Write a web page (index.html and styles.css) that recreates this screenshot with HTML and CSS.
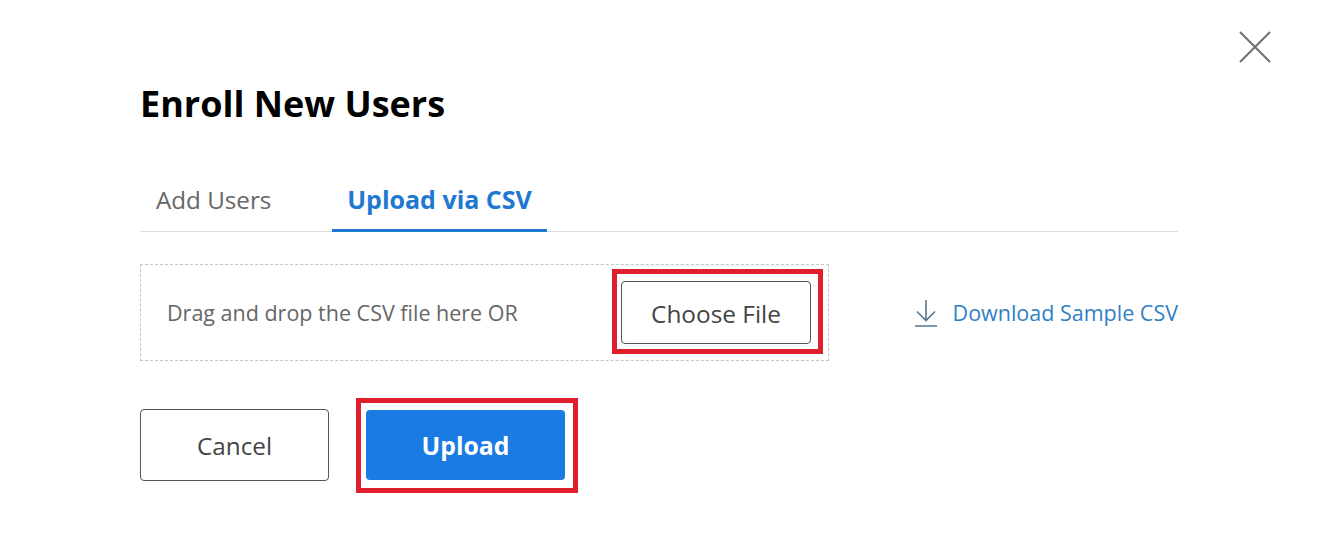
FILE: index.html
```html
<!DOCTYPE html>
<html lang="en">
<head>
    <meta charset="UTF-8">
    <title>Enroll New Users</title>
    <link rel="stylesheet" href="styles.css">
</head>
<body>
    <div class="modal">
        <svg class="close" width="34" height="34" viewBox="0 0 34 34">
            <path d="M2 2 L32 32 M32 2 L2 32" stroke="#707070" stroke-width="2" fill="none"/>
        </svg>
        <h1 class="title">Enroll New Users</h1>
        <div class="tabs">
            <div class="tab">Add Users</div>
            <div class="tab active">Upload via CSV</div>
        </div>
        <div class="upload-row">
            <div class="dropzone">
                <span class="drop-text">Drag and drop the CSV file here OR</span>
                <div class="highlight highlight-file">
                    <button class="button button-file">Choose File</button>
                </div>
            </div>
            <a class="download">
                <svg width="24" height="28" viewBox="0 0 24 28">
                    <path d="M12 1 V21 M3 12.5 L12 21.5 L21 12.5 M1 27 H23" stroke="#55768f" stroke-width="1.6" fill="none"/>
                </svg>
                Download Sample CSV
            </a>
        </div>
        <div class="actions">
            <button class="button button-cancel">Cancel</button>
            <div class="highlight highlight-upload">
                <button class="button button-upload">Upload</button>
            </div>
        </div>
    </div>
</body>
</html>
```

FILE: styles.css
```css
* {
    box-sizing: border-box;
}

body {
    margin: 0;
    background-color: #fff;
    font-family: "Open Sans", Arial, sans-serif;
}

.modal {
    position: relative;
    width: 1318px;
    height: 560px;
    padding: 81px 140px 0;
}

.close {
    position: absolute;
    top: 30px;
    left: 1238px;
}

.title {
    margin: 0;
    font-size: 36px;
    line-height: 46px;
    font-weight: 700;
    color: #000;
}

.tabs {
    display: flex;
    width: 1038px;
    height: 84px;
    margin-top: 21px;
    padding-left: 16px;
    gap: 61px;
    border-bottom: 1px solid #ddd;
}

.tab {
    width: 115px;
    padding-top: 35px;
    font-size: 24.2px;
    line-height: 33px;
    white-space: nowrap;
    color: #666;
}

.tab.active {
    width: 215px;
    height: 84px;
    padding: 35px 0 0;
    font-size: 25px;
    font-weight: 700;
    text-align: center;
    color: #1f78d1;
    border-bottom: 3px solid #1f78d1;
}

.upload-row {
    display: flex;
    align-items: center;
    justify-content: space-between;
    width: 1038px;
    margin-top: 32px;
}

.dropzone {
    display: flex;
    align-items: center;
    justify-content: space-between;
    width: 689px;
    height: 97px;
    padding: 0 5px 0 26px;
    border: 1px dashed #c4c4c4;
}

.drop-text {
    font-size: 21.5px;
    color: #666;
}

.download {
    display: flex;
    align-items: center;
    gap: 15px;
    font-size: 21.5px;
    color: #2f7fc4;
}

.highlight {
    border: 5px solid #e01f2d;
}

.highlight-file {
    margin-bottom: 2px;
    padding: 7px 7px 5px 4px;
}

.highlight-upload {
    padding: 7px 8px 8px 5px;
}

.button {
    font-family: "Open Sans", Arial, sans-serif;
    border-radius: 4px;
}

.button-file {
    width: 190px;
    height: 63px;
    padding-top: 3px;
    font-size: 24.4px;
    color: #444;
    background-color: #fff;
    border: 1px solid #555;
}

.actions {
    display: flex;
    align-items: center;
    gap: 27px;
    margin-top: 37px;
}

.button-cancel {
    width: 189px;
    height: 72px;
    margin-bottom: 1px;
    font-size: 24.3px;
    color: #444;
    background-color: #fff;
    border: 1px solid #555;
}

.button-upload {
    width: 199px;
    height: 70px;
    font-size: 24.8px;
    font-weight: 700;
    color: #fff;
    background-color: #1a7be3;
    border: none;
}
```
